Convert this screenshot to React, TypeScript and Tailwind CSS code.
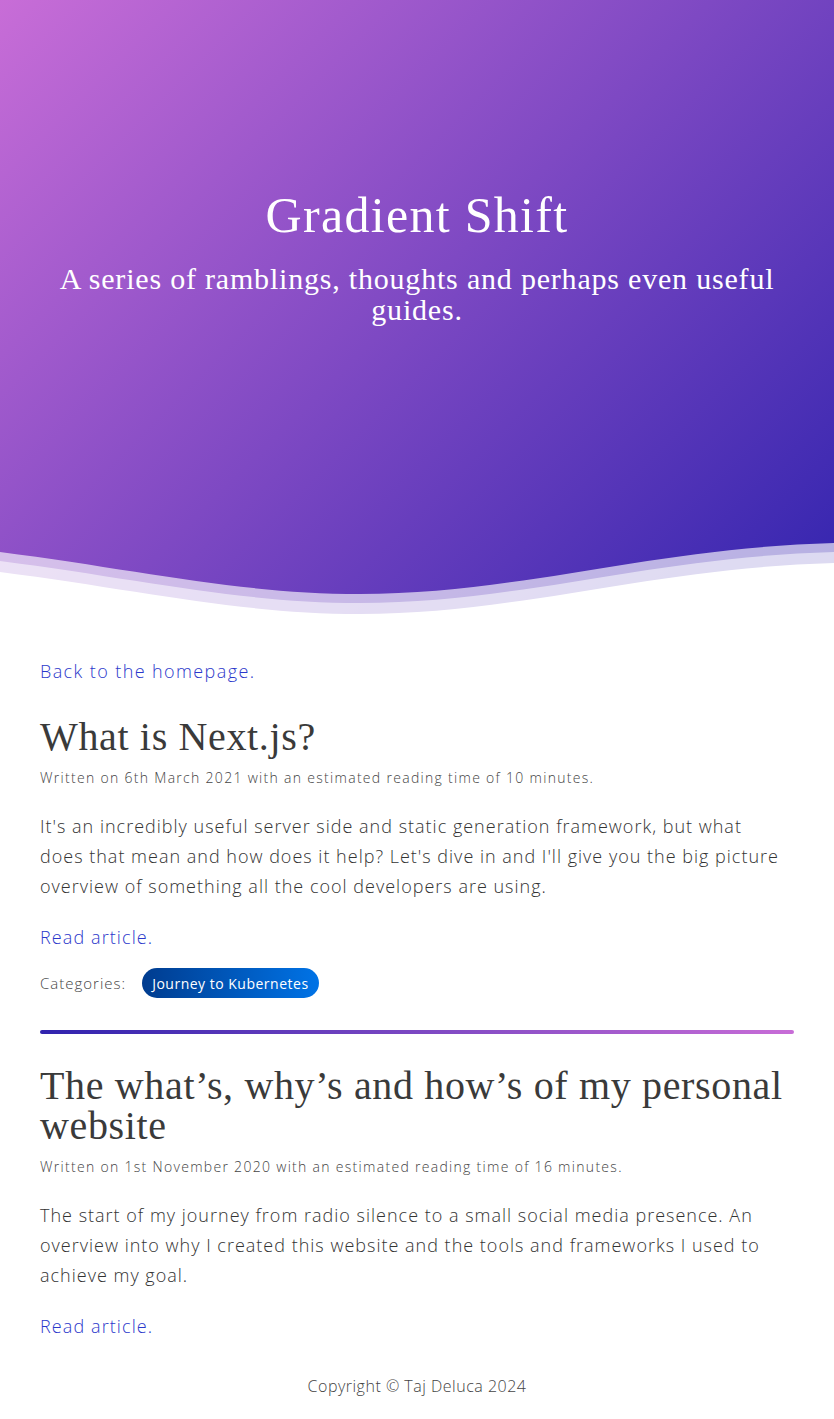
import React from 'react';

const posts = [
  {
    title: 'What is Next.js?',
    meta: 'Written on 6th March 2021 with an estimated reading time of 10 minutes.',
    summary:
      "It's an incredibly useful server side and static generation framework, but what\ndoes that mean and how does it help? Let's dive in and I'll give you the big picture overview of something all the cool developers are using.",
    categories: ['Journey to Kubernetes'],
  },
  {
    title: 'The what’s, why’s and how’s of my personal website',
    meta: 'Written on 1st November 2020 with an estimated reading time of 16 minutes.',
    summary:
      'The start of my journey from radio silence to a small social media presence. An overview into why I created this website and the tools and frameworks I used to achieve my goal.',
    categories: [],
  },
];

const slab = "font-['Liberation_Serif','DejaVu_Serif',serif]";

function Wave() {
  // white overlays that cut the gradient into the wave at the bottom of the hero
  const edge = (dy: number) =>
    `M0 ${12 + dy} C 140 ${30 + dy}, 240 ${54 + dy}, 360 ${54 + dy} C 520 ${54 + dy}, 650 ${8 + dy}, 834 ${3 + dy} L 834 90 L 0 90 Z`;
  return (
    <svg
      className="absolute bottom-0 left-0 w-full h-[90px]"
      viewBox="0 0 834 90"
      preserveAspectRatio="none"
    >
      <path d={edge(0)} fill="#ffffff" fillOpacity={0.64} />
      <path d={edge(9)} fill="#ffffff" fillOpacity={0.53} />
      <path d={edge(20)} fill="#ffffff" />
    </svg>
  );
}

export default function App() {
  return (
    <div className="min-h-[1419px] bg-white font-['Open_Sans',sans-serif] text-[#333]">
      {/* Hero */}
      <header className="relative h-[630px] bg-[linear-gradient(135deg,#c86dd7_0%,#3023ae_100%)] text-white">
        <div className="flex flex-col items-center pt-[187px] px-10 text-center">
          <h1 className={`${slab} text-[50px] leading-[56px] tracking-[1.3px] font-normal`}>Gradient Shift</h1>
          <p className={`${slab} mt-5 text-[30px] leading-[31px] tracking-[0.8px] font-normal`}>
            A series of ramblings, thoughts and perhaps even useful guides.
          </p>
        </div>
        <Wave />
      </header>

      {/* Posts */}
      <main className="px-10 pt-[28px]">
        <a href="#" className="text-[18px] leading-[27px] tracking-[1.4px] font-light text-[#2b38cb]">
          Back to the homepage.
        </a>

        {posts.map((post) => (
          <article key={post.title} className="mt-[32px]">
            <h2 className={`${slab} text-[40px] leading-[40px] tracking-[0.65px] font-normal text-[#3a3a3a]`}>
              {post.title}
            </h2>
            <p className="mt-[11px] text-[14px] leading-[20px] tracking-[1.3px] font-light text-[#444]">{post.meta}</p>
            <p className="mt-[23px] whitespace-pre-line text-[18px] leading-[30px] tracking-[1px] font-light text-[#333]">
              {post.summary}
            </p>
            <a
              href="#"
              className="block mt-[23px] text-[18px] leading-[27px] tracking-[1.1px] font-light text-[#2b38cb]"
            >
              Read article.
            </a>
            {post.categories.length > 0 && (
              <>
                <div className="mt-[17px] flex items-center gap-4">
                  <span className="text-[15px] tracking-[1px] font-light text-[#444]">Categories:</span>
                  {post.categories.map((c) => (
                    <span
                      key={c}
                      className="h-[30px] flex items-center rounded-full px-[10px] text-[14px] tracking-[0.5px] text-white bg-[linear-gradient(90deg,#003c8f,#0073e6)]"
                    >
                      {c}
                    </span>
                  ))}
                </div>
                <div className="mt-[32px] h-1 rounded-full bg-[linear-gradient(90deg,#3023ae,#c86dd7)]" />
              </>
            )}
          </article>
        ))}

        <footer className="mt-[34px] pb-[21px] text-center text-[16px] leading-[24px] tracking-[0.5px] font-light text-[#444]">
          Copyright © Taj Deluca 2024
        </footer>
      </main>
    </div>
  );
}
